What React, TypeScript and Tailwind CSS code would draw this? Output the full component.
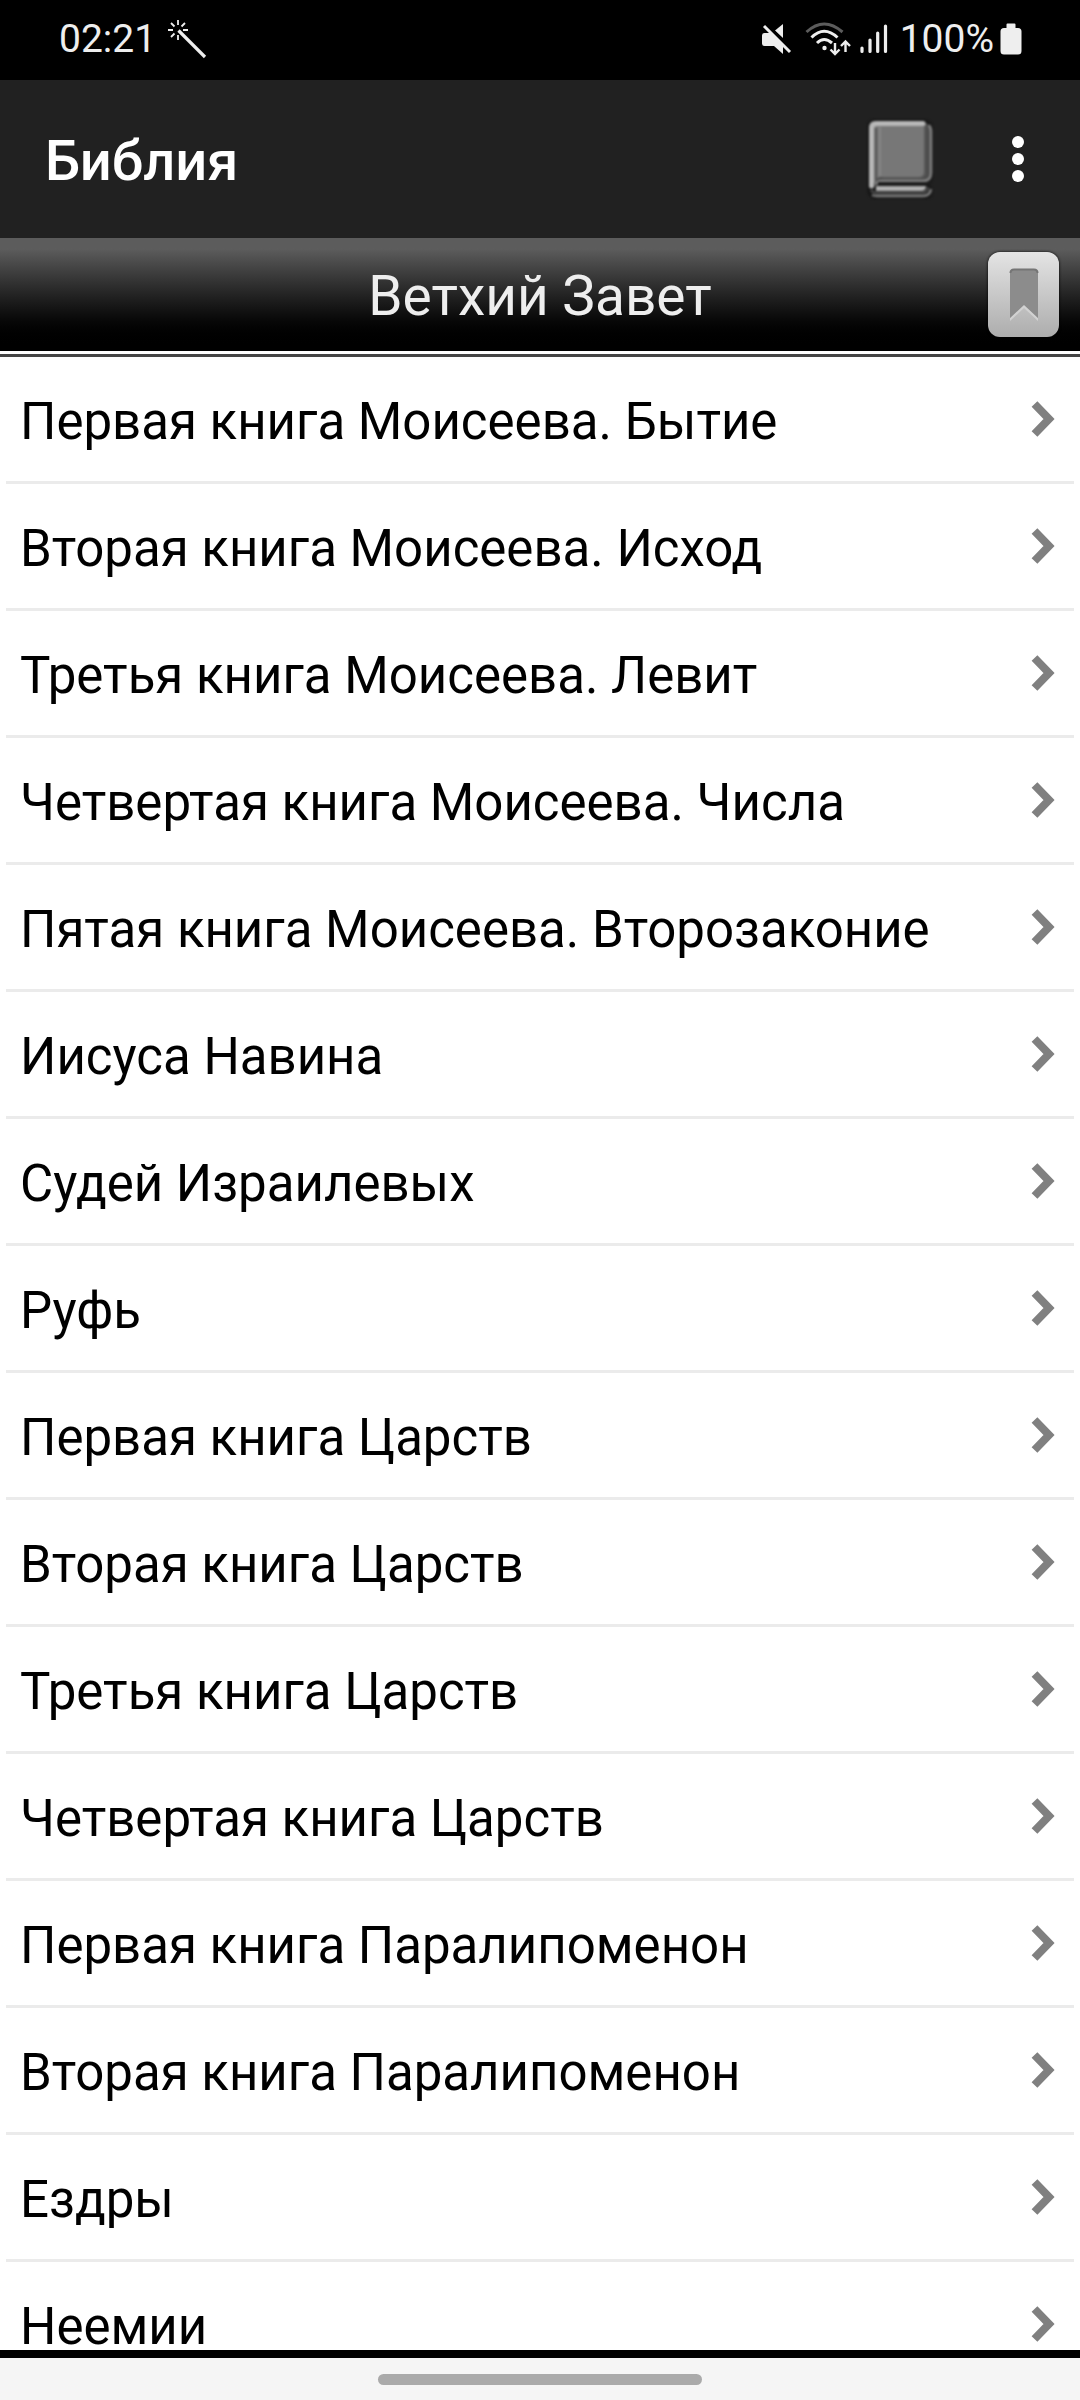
const books = [
  "Первая книга Моисеева. Бытие",
  "Вторая книга Моисеева. Исход",
  "Третья книга Моисеева. Левит",
  "Четвертая книга Моисеева. Числа",
  "Пятая книга Моисеева. Второзаконие",
  "Иисуса Навина",
  "Судей Израилевых",
  "Руфь",
  "Первая книга Царств",
  "Вторая книга Царств",
  "Третья книга Царств",
  "Четвертая книга Царств",
  "Первая книга Паралипоменон",
  "Вторая книга Паралипоменон",
  "Ездры",
  "Неемии",
];

function WandIcon() {
  return (
    <svg aria-hidden="true" className="h-10 w-10 shrink-0" fill="none" stroke="#eee" viewBox="0 0 40 40">
      <path d="M11.5 11.5 38 38" strokeWidth="3.2" />
      <path
        d="M11 1v5M11 16v5M1 11h5M16 11h5M4 4l3.5 3.5M18 4l-3.5 3.5M4 18l3.5-3.5"
        strokeWidth="1.8"
      />
    </svg>
  );
}

function MuteIcon() {
  return (
    <svg aria-hidden="true" className="h-8 w-[30px]" viewBox="0 0 30 32">
      <path d="M2.5 10h6L21 22v9l-9-8H2.5Q0 23 0 20.5v-8Q0 10 2.5 10Z" fill="#eee" />
      <path d="M21 1v14l-8-7.5Z" fill="#eee" />
      <path d="M5 2 31 28" stroke="#000" strokeWidth="3" />
      <path d="M2 3 28 29" stroke="#eee" strokeWidth="3" />
    </svg>
  );
}

function WifiIcon() {
  return (
    <svg aria-hidden="true" className="h-[34px] w-[46px]" fill="none" stroke="#eee" strokeWidth="3" viewBox="0 0 46 34">
      <path d="M1.5 10Q19-6 37.5 10" stroke="#5c5c5c" />
      <path d="M6.5 15.5Q19 3 32.5 15.5" />
      <path d="M12 21Q19 14 27 21" />
      <circle cx="19.5" cy="26" fill="#eee" r="2.2" stroke="none" />
      <path d="M30 21v11M25.5 27.5 30 32l4.500-4.500" strokeWidth="2.400" />
      <path d="M40.5 30V19.5M36 24l4.5-4.5L45 24" strokeWidth="2.4" />
    </svg>
  );
}

function SignalIcon() {
  return (
    <svg
      aria-hidden="true"
      className="h-[30px] w-7"
      fill="none"
      stroke="#eee"
      strokeLinecap="round"
      strokeWidth="3.2"
      viewBox="0 0 28 30"
    >
      <path d="M2 24v3.500M10 16v11.500M17.700 9v18.500M25.500 2v25.500" />
    </svg>
  );
}

function BatteryIcon() {
  return (
    <svg aria-hidden="true" className="h-8 w-[22px]" fill="#eee" viewBox="0 0 22 32">
      <path d="M6.500 5V1.500Q6.500.5 7.500.5h7q1 0 1 1V5H18q3.500 0 3.500 3.500V28q0 3.500-3.500 3.500H4Q.5 31.500.5 28V8.500Q.5 5 4 5Z" />
    </svg>
  );
}

function BookIcon() {
  return (
    <svg aria-hidden="true" className="h-20 w-[66px] blur-[1px]" viewBox="0 0 66 80">
      <path d="M8 0h50q8 2 8 10v46q0 7-4 9 4 4 4 8 0 7-8 7H9q-8 0-9-9V8Q0 0 8 0Z" fill="#171717" />
      {/* back cover */}
      <path d="M56 3q8 2 8 9v43q0 8-8 8H14q-5 0-6 5l-3-2V5Z" fill="#4c4c4c" />
      <path d="M62 6q2 3 2 6v42q0 8-8 8H14q-4 0-5 4" fill="none" stroke="#828282" strokeWidth="2.5" />
      {/* front cover */}
      <path d="M8 2h46q5 0 5 5v46q0 5-5 5H14q-5 0-6 6H2V8q0-6 6-6Z" fill="#777" />
      <path d="M9 9v52M58 6v47q0 6-6 6H15" fill="none" stroke="#555" strokeWidth="2" />
      <path d="M13 8v49" stroke="#868686" strokeWidth="2" />
      {/* lit edges and pages */}
      <path d="M4.500 67V10q0-5.500 5.500-5.500h46" fill="none" stroke="#b8b8b8" strokeLinecap="round" strokeWidth="5" />
      <path d="M11 64.500h53" stroke="#1c1c1c" strokeWidth="3" />
      <path d="M9 67h50q0 5-5 5H9Z" fill="#b0b0b0" />
      <path d="M4 71q2 3 7 3h43q6 0 7-6" fill="none" stroke="#444" strokeWidth="3" />
      <path d="M5 76q2 1 5 1h46q7 0 8-7" fill="none" stroke="#7c7c7c" strokeWidth="2.5" />
    </svg>
  );
}

function BookmarkIcon() {
  return (
    <svg aria-hidden="true" className="h-[54px] w-[30px]" viewBox="0 0 30 54">
      <path d="M1 50v3l14-13 14 13v-3L15 36Z" fill="#d2d2d2" />
      <path d="M1 5q0-4 4-4h20q4 0 4 4v45L15 37 1 50Z" fill="#8c8c8c" />
      <path d="M1.500 5q0-3.500 3.500-3.500h20q3.500 0 3.500 3.500" fill="none" stroke="#757575" strokeWidth="2" />
    </svg>
  );
}

function StatusBar() {
  return (
    <div className="flex h-20 shrink-0 items-center bg-black pr-[58px] pb-[2px] pl-[59px] text-[39px] leading-none text-[#eee]">
      <span>02:21</span>
      <span className="ml-[11px]">
        <WandIcon />
      </span>
      <div className="ml-auto flex items-center">
        <MuteIcon />
        <span className="ml-[13px]">
          <WifiIcon />
        </span>
        <span className="ml-[9px]">
          <SignalIcon />
        </span>
        <span className="ml-3">100%</span>
        <span className="ml-[6px]">
          <BatteryIcon />
        </span>
      </div>
    </div>
  );
}

function Toolbar() {
  return (
    <header className="flex h-[158px] shrink-0 items-center bg-[#212121] pr-8 pl-[45px]">
      <h1 className="pt-1 text-[56px] leading-none font-medium text-white">Библия</h1>
      <button aria-label="Книги" className="ml-auto" type="button">
        <BookIcon />
      </button>
      <button
        aria-label="Ещё"
        className="ml-[55px] flex w-[60px] flex-col items-center gap-[5px] py-4"
        type="button"
      >
        <span className="size-3 rounded-full bg-white" />
        <span className="size-3 rounded-full bg-white" />
        <span className="size-3 rounded-full bg-white" />
      </button>
    </header>
  );
}

function SectionHeader() {
  return (
    <div className="grid h-[113px] shrink-0 grid-cols-[1fr_auto_1fr] items-center bg-linear-to-b from-[#5c5c5c] from-10% to-black to-98% px-[21px]">
      <h2 className="col-start-2 pt-1 text-[55px] leading-none text-[#eee]">Ветхий Завет</h2>
      <button
        aria-label="Закладки"
        className="flex h-[85px] w-[71px] items-center justify-center justify-self-end rounded-xl bg-linear-to-b from-[#e4e4e4] to-[#adadad] shadow-[0_0_3px_#000]"
        type="button"
      >
        <BookmarkIcon />
      </button>
    </div>
  );
}

function BookRow({ title }: { title: string }) {
  return (
    <li className="border-b-3 border-[#ebebeb]">
      <button className="flex h-[124px] w-full items-center justify-between pr-4 pl-[14px] text-left" type="button">
        <span className="pt-1 text-[51px] leading-none text-black">{title}</span>
        <svg aria-hidden="true" className="h-10 w-7" fill="none" viewBox="0 0 28 40">
          <path d="M4.500 5 19 20 4.500 35" stroke="#808080" strokeWidth="8" />
        </svg>
      </button>
    </li>
  );
}

export default function App() {
  return (
    <div className="flex h-screen flex-col bg-white font-[Roboto,sans-serif]">
      <StatusBar />
      <Toolbar />
      <SectionHeader />
      <main className="mt-[3px] min-h-0 flex-1 overflow-hidden border-t-3 border-[#444]">
        <ul className="px-[6px]">
          {books.map((title) => (
            <BookRow key={title} title={title} />
          ))}
        </ul>
      </main>
      <div className="flex h-[50px] shrink-0 items-center justify-center border-t-8 border-black bg-[#f5f5f5]">
        <div className="h-[11px] w-[30%] rounded-full bg-[#aaa]" />
      </div>
    </div>
  );
}
